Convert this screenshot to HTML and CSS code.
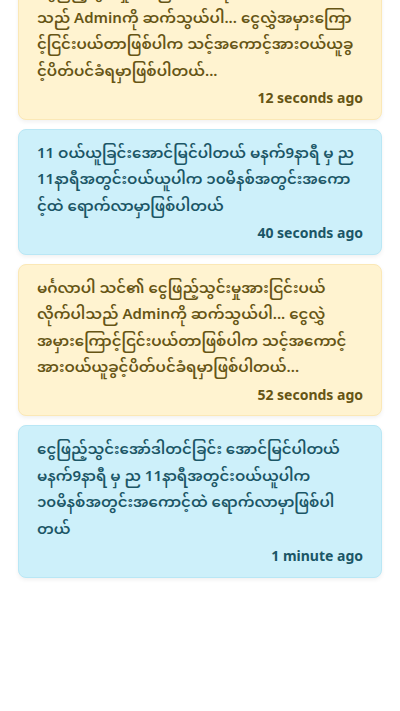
FILE: index.html
```html
<!DOCTYPE html>
<html lang="my">
<head>
<meta charset="utf-8">
<title>Notifications</title>
<link rel="stylesheet" href="styles.css">
</head>
<body>
<main class="list">
  <article class="card card-yellow">
    <p class="msg">ငွေဖြည့်သွင်းမှုအားငြင်းပယ်လိုက်ပါ<br>သည် Adminကို ဆက်သွယ်ပါ... ငွေလွှဲအမှားကြော<br>င့်ငြင်းပယ်တာဖြစ်ပါက သင့်အကောင့်အားဝယ်ယူခွ<br>င့်ပိတ်ပင်ခံရမှာဖြစ်ပါတယ်...</p>
    <p class="time">12 seconds ago</p>
  </article>
  <article class="card card-blue">
    <p class="msg">11 ဝယ်ယူခြင်းအောင်မြင်ပါတယ် မနက်9နာရီ မှ ည<br>11နာရီအတွင်းဝယ်ယူပါက ၁၀မိနစ်အတွင်းအကော<br>င့်ထဲ ရောက်လာမှာဖြစ်ပါတယ်</p>
    <p class="time">40 seconds ago</p>
  </article>
  <article class="card card-yellow">
    <p class="msg">မင်္ဂလာပါ သင်၏ ငွေဖြည့်သွင်းမှုအားငြင်းပယ်<br>လိုက်ပါသည် Adminကို ဆက်သွယ်ပါ... ငွေလွှဲ<br>အမှားကြောင့်ငြင်းပယ်တာဖြစ်ပါက သင့်အကောင့်<br>အားဝယ်ယူခွင့်ပိတ်ပင်ခံရမှာဖြစ်ပါတယ်...</p>
    <p class="time">52 seconds ago</p>
  </article>
  <article class="card card-blue">
    <p class="msg">ငွေဖြည့်သွင်းအော်ဒါတင်ခြင်း အောင်မြင်ပါတယ်<br>မနက်9နာရီ မှ ည 11နာရီအတွင်းဝယ်ယူပါက<br>၁၀မိနစ်အတွင်းအကောင့်ထဲ ရောက်လာမှာဖြစ်ပါ<br>တယ်</p>
    <p class="time">1 minute ago</p>
  </article>
</main>
</body>
</html>
```

FILE: styles.css
```css
html, body {
  margin: 0;
  padding: 0;
  background: #ffffff;
}
body {
  width: 400px;
  height: 711px;
  overflow: hidden;
  font-family: "Noto Sans Myanmar", "Padauk", "Myanmar Text", "Noto Sans", sans-serif;
}
.list {
  display: flex;
  flex-direction: column;
  gap: 9px;
  padding: 0 18px;
  margin-top: -33px;
}
.card {
  border-radius: 8px;
  padding: 12px 18px 9px 18px;
  box-shadow: 0 2px 4px rgba(0, 0, 0, 0.06);
}
.card-yellow {
  background: #fff3d0;
  border: 1px solid #fbe8b6;
  color: #665515;
}
.card-blue {
  background: #cdf0fa;
  border: 1px solid #b9e7f5;
  color: #1b5666;
}
.msg {
  margin: 0;
  font-size: 15px;
  line-height: 26.5px;
  font-weight: 600;
  white-space: nowrap;
}
.time {
  margin: 0;
  text-align: right;
  font-family: "Noto Sans", sans-serif;
  font-weight: 700;
  font-size: 14px;
  line-height: 23.5px;
}
```
